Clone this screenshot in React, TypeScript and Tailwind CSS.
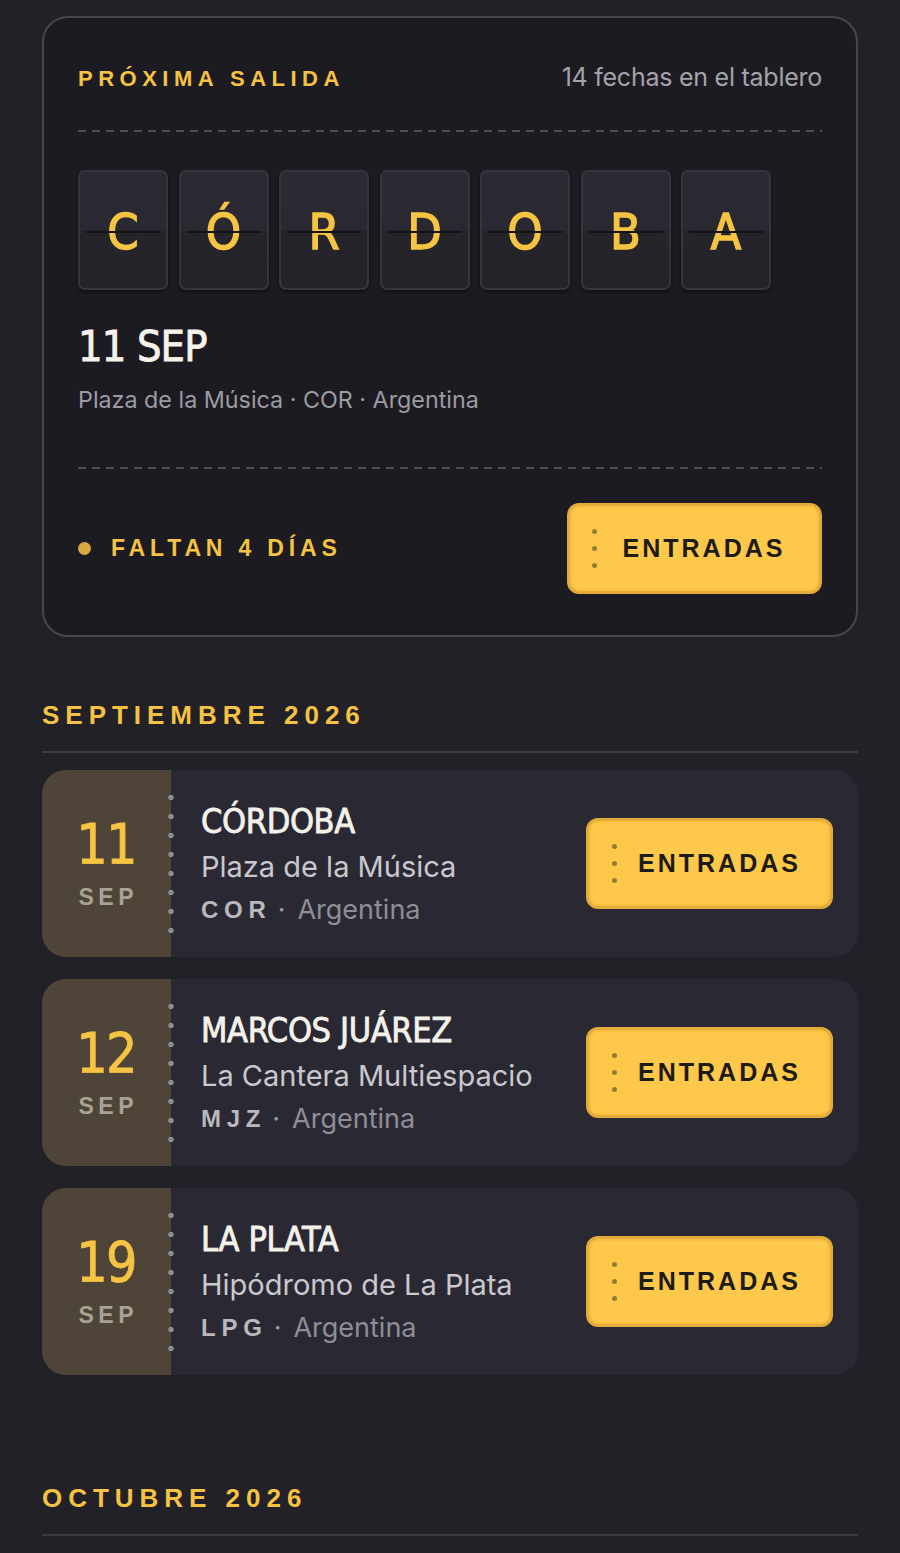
import React from "react";

const display =
  "font-['Liberation_Sans_Narrow','DejaVu_Sans_Condensed','DejaVu_Sans',sans-serif] font-stretch-condensed font-normal [-webkit-text-stroke:0.8px_currentColor]";
const label = "font-['Liberation_Sans',Arial,sans-serif] font-bold uppercase";
const body = "font-['Inter','Liberation_Sans',sans-serif]";

interface EventItem {
  day: string;
  month: string;
  city: string;
  venue: string;
  code: string;
  country: string;
}

const september: EventItem[] = [
  { day: "11", month: "SEP", city: "CÓRDOBA", venue: "Plaza de la Música", code: "COR", country: "Argentina" },
  { day: "12", month: "SEP", city: "MARCOS JUÁREZ", venue: "La Cantera Multiespacio", code: "MJZ", country: "Argentina" },
  { day: "19", month: "SEP", city: "LA PLATA", venue: "Hipódromo de La Plata", code: "LPG", country: "Argentina" },
];

const Dashed: React.FC<{ className?: string }> = ({ className = "" }) => (
  <div
    className={`h-[2px] w-full bg-[repeating-linear-gradient(90deg,#4f4e56_0_8px,transparent_8px_14px)] ${className}`}
  />
);

const TicketButton: React.FC<{ wide?: boolean }> = ({ wide }) => (
  <button
    type="button"
    className={`flex h-[91px] shrink-0 items-center rounded-[12px] border-[3px] border-[#e3ab39] bg-[#fec84a] shadow-[inset_0_0_0_2px_#f9c041] ${
      wide ? "w-[255px] pl-[22px]" : "w-[247px] pl-[23px]"
    }`}
  >
    {/* perforation */}
    <span className="flex flex-col items-center gap-[12px]">
      <span className="h-[5px] w-[5px] rounded-full bg-[#967a33]" />
      <span className="h-[5px] w-[5px] rounded-full bg-[#967a33]" />
      <span className="h-[5px] w-[5px] rounded-full bg-[#967a33]" />
    </span>
    <span
      className={`${label} flex-1 pr-[8px] text-center text-[25px] leading-none tracking-[0.12em] text-[#1d1b17]`}
    >
      Entradas
    </span>
  </button>
);

const FlipTile: React.FC<{ char: string }> = ({ char }) => (
  <div className="relative flex h-[120px] w-[90px] items-center justify-center overflow-hidden rounded-[7px] border-2 border-[#36353d] bg-[linear-gradient(180deg,#2b2a32_0%,#2a2931_50%,#25242b_50%,#24232a_100%)] shadow-[0_2px_3px_rgba(0,0,0,0.45)]">
    <span className={`${display} pt-[4px] text-[50px] leading-none text-[#f6c443] [-webkit-text-stroke:1.3px_#f6c443]`}>
      {char}
    </span>
    <span className="absolute left-[6px] right-[6px] top-[59px] h-[2px] bg-[#141318]" />
  </div>
);

const NextDeparture: React.FC = () => {
  const city = "CÓRDOBA".split("");
  return (
    <section className="rounded-[26px] border-2 border-[#47464e] bg-[#1c1b21] px-[34px] pb-[41px] pt-[46px]">
      <div className="flex h-[28px] items-center justify-between">
        <span className={`${label} text-[22px] tracking-[0.25em] text-[#f5c243]`}>Próxima salida</span>
        <span className={`${body} text-[25px] tracking-[-0.01em] text-[#a4a3a9]`}>14 fechas en el tablero</span>
      </div>
      <Dashed className="mt-[38px]" />
      <div className="mt-[38px] flex gap-[10.5px]">
        {city.map((c, i) => (
          <FlipTile key={i} char={c} />
        ))}
      </div>
      <h2 className={`${display} mt-[32px] h-[48px] text-[43px] leading-[48px] tracking-[-0.02em] text-[#f6f3ea]`}>
        11 SEP
      </h2>
      <p className={`${body} mt-[16px] text-[23.3px] leading-[28px] text-[#9d9ca2]`}>
        Plaza de la Música · COR · Argentina
      </p>
      <Dashed className="mt-[53px]" />
      <div className="mt-[34px] flex items-center justify-between">
        <div className="flex items-center gap-[20px]">
          <span className="h-[13px] w-[13px] rounded-full bg-[#dba93b]" />
          <span className={`${label} text-[23px] tracking-[0.21em] text-[#f5c243]`}>Faltan 4 días</span>
        </div>
        <TicketButton wide />
      </div>
    </section>
  );
};

const MonthHeading: React.FC<{ title: string; className?: string }> = ({ title, className = "" }) => (
  <div className={className}>
    <h3 className={`${label} text-[26px] leading-[32px] tracking-[0.23em] text-[#f5c243]`}>{title}</h3>
    <div className="mt-[20px] h-[2px] bg-[#3c3b43]" />
  </div>
);

const EventRow: React.FC<{ event: EventItem }> = ({ event }) => (
  <article className="flex h-[187px] items-stretch overflow-hidden rounded-[24px] bg-[#2a2933]">
    <div className="flex w-[126px] flex-col items-center justify-center bg-[#4e4538] pl-[2px]">
      <span className={`${display} text-[55px] leading-[56px] tracking-[-0.03em] text-[#f6c443]`}>{event.day}</span>
      <span className={`${label} mt-[11px] pl-[0.2em] text-[23px] leading-[28px] tracking-[0.2em] text-[#a9a294]`}>
        {event.month}
      </span>
    </div>
    <div className="w-[6px] bg-[linear-gradient(90deg,#4e4538_50%,#2a2933_50%)] py-[18px]">
      <div className="h-full bg-[radial-gradient(circle,#8e8d93_2.4px,transparent_3px)] bg-[length:6px_19px] bg-repeat-y" />
    </div>
    <div className="flex flex-1 flex-col justify-center gap-[8px] pl-[27px]">
      <h4 className={`${display} text-[34px] leading-[40px] tracking-[-0.01em] text-[#f4f1ea]`}>{event.city}</h4>
      <p className={`${body} text-[29px] leading-[36px] text-[#c9c8cd]`}>{event.venue}</p>
      <p className="flex items-center text-[27px] leading-[34px]">
        <span className={`${label} text-[24px] tracking-[0.24em] text-[#b9b8bd]`}>{event.code}</span>
        <span className={`${body} pl-[6px] pr-[12px] text-[#9b9aa0]`}>·</span>
        <span className={`${body} text-[27px] text-[#8f8e95]`}>{event.country}</span>
      </p>
    </div>
    <div className="flex items-center pr-[25px]">
      <TicketButton />
    </div>
  </article>
);

export default function App() {
  return (
    <main className="min-h-[1553px] bg-[#222128] px-[42px] pt-[16px]">
      <NextDeparture />
      <MonthHeading title="Septiembre 2026" className="mt-[62px]" />
      <div className="mt-[17px] flex flex-col gap-[22px]">
        {september.map((e) => (
          <EventRow key={e.day} event={e} />
        ))}
      </div>
      <MonthHeading title="Octubre 2026" className="mt-[107px]" />
    </main>
  );
}
